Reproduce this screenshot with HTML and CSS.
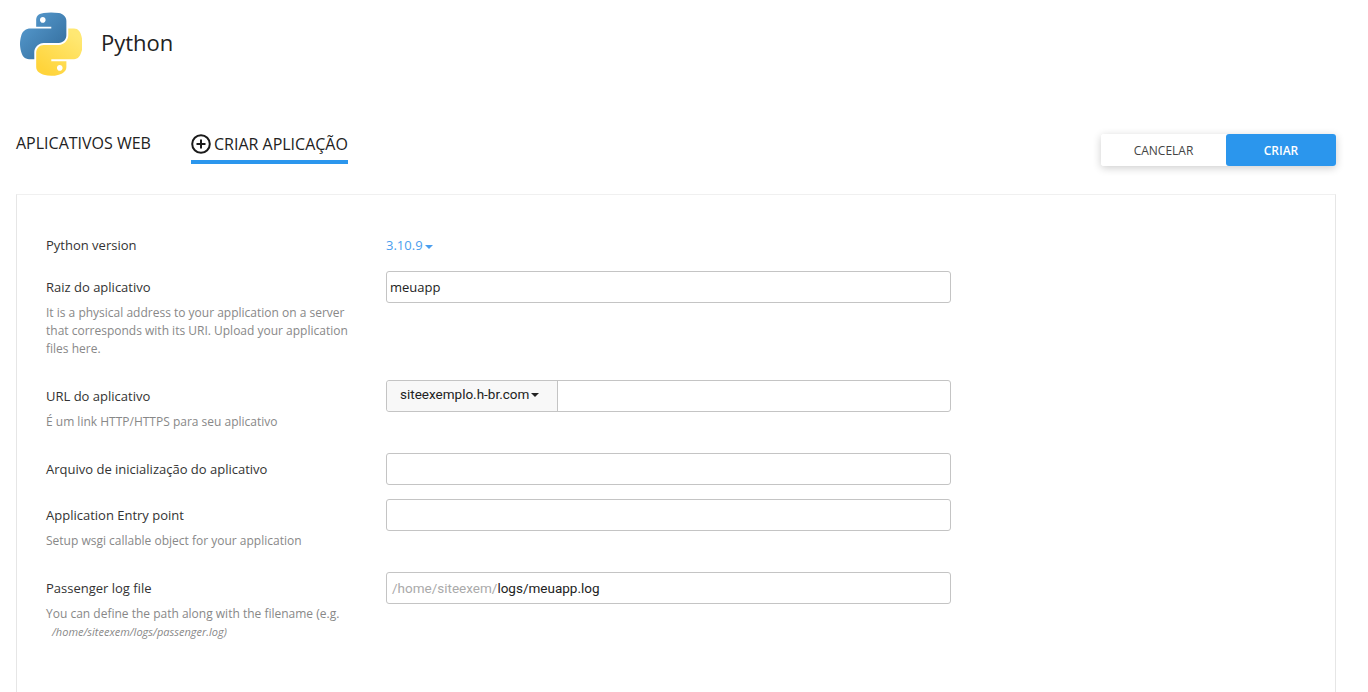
FILE: index.html
```html
<!DOCTYPE html>
<html lang="en">
<head>
  <meta charset="UTF-8">
  <title>Python</title>
  <link rel="stylesheet" href="styles.css">
</head>
<body>
  <header class="page-header">
    <svg class="logo" viewBox="0 0 110 112" width="62" height="64">
      <defs>
        <linearGradient id="py-blue" x1="0" y1="0" x2="1" y2="1">
          <stop offset="0" stop-color="#5a9fd4"/>
          <stop offset="1" stop-color="#306998"/>
        </linearGradient>
        <linearGradient id="py-yellow" x1="0.2" y1="0.9" x2="0.8" y2="0.1">
          <stop offset="0" stop-color="#ffd43b"/>
          <stop offset="1" stop-color="#ffe873"/>
        </linearGradient>
      </defs>
      <path fill="url(#py-blue)" d="M54.919 0.001c-4.584.022-8.961.413-12.813 1.095C30.76 3.099 28.7 7.295 28.7 15.032v10.219h26.813v3.406H18.638c-7.793 0-14.616 4.684-16.75 13.594-2.462 10.213-2.571 16.586 0 27.25 1.906 7.938 6.457 13.594 14.25 13.594h9.219v-12.25c0-8.85 7.657-16.656 16.75-16.656h26.781c7.454 0 13.406-6.138 13.406-13.625v-25.531c0-7.266-6.13-12.725-13.406-13.937C64.282.328 59.502-.02 54.918.001zm-14.5 8.219c2.77 0 5.031 2.299 5.031 5.125 0 2.816-2.262 5.094-5.031 5.094-2.78 0-5.031-2.278-5.031-5.094 0-2.826 2.252-5.125 5.031-5.125z"/>
      <path fill="url(#py-yellow)" d="M85.638 28.657v11.906c0 9.231-7.826 17-16.75 17H42.106c-7.336 0-13.406 6.278-13.406 13.625v25.531c0 7.266 6.319 11.54 13.406 13.625 8.488 2.496 16.627 2.947 26.781 0 6.75-1.954 13.406-5.888 13.406-13.625V86.5H55.513v-3.405H95.7c7.793 0 10.696-5.436 13.406-13.594 2.8-8.399 2.68-16.476 0-27.25-1.925-7.758-5.604-13.594-13.406-13.594h-10.062zM70.575 93.313c2.78 0 5.031 2.278 5.031 5.094 0 2.826-2.252 5.125-5.031 5.125-2.77 0-5.031-2.299-5.031-5.125 0-2.816 2.262-5.094 5.031-5.094z"/>
    </svg>
    <h1>Python</h1>
  </header>

  <div class="toolbar">
    <nav class="tabs">
      <a class="tab">APLICATIVOS WEB</a>
      <a class="tab active">
        <svg class="tab-icon" viewBox="0 0 20 20" width="20" height="20">
          <circle cx="10" cy="10" r="8.8" fill="none" stroke="#1a1a1a" stroke-width="2"/>
          <path d="M10 5.5v9M5.5 10h9" fill="none" stroke="#1a1a1a" stroke-width="2"/>
        </svg>CRIAR APLICAÇÃO
      </a>
    </nav>
    <div class="actions">
      <button type="button" class="btn">CANCELAR</button>
      <button type="button" class="btn btn-primary">CRIAR</button>
    </div>
  </div>

  <main class="card">
    <div class="form-row row-version">
      <div class="field-info"><label>Python version</label></div>
      <div class="version">3.10.9<span class="caret"></span></div>
    </div>

    <div class="form-row row-root">
      <div class="field-info">
        <label>Raiz do aplicativo</label>
        <p class="hint">It is a physical address to your application on a server that corresponds with its URI. Upload your application files here.</p>
      </div>
      <div class="input">meuapp</div>
    </div>

    <div class="form-row row-url">
      <div class="field-info">
        <label>URL do aplicativo</label>
        <p class="hint">É um link HTTP/HTTPS para seu aplicativo</p>
      </div>
      <div class="input input-group">
        <div class="domain">siteexemplo.h-br.com<span class="caret dark"></span></div>
      </div>
    </div>

    <div class="form-row row-startup">
      <div class="field-info"><label>Arquivo de inicialização do aplicativo</label></div>
      <div class="input"></div>
    </div>

    <div class="form-row row-entry">
      <div class="field-info">
        <label>Application Entry point</label>
        <p class="hint">Setup wsgi callable object for your application</p>
      </div>
      <div class="input"></div>
    </div>

    <div class="form-row">
      <div class="field-info">
        <label>Passenger log file</label>
        <p class="hint">You can define the path along with the filename (e.g. <em class="hint-path">/home/siteexem/logs/passenger.log)</em></p>
      </div>
      <div class="input input-path"><span class="path-prefix">/home/siteexem/</span>logs/meuapp.log</div>
    </div>
  </main>
</body>
</html>
```

FILE: styles.css
```css
* {
  margin: 0;
  padding: 0;
  box-sizing: border-box;
}

html, body {
  height: 692px;
  overflow: hidden;
}

body {
  font-family: "Open Sans", Arial, sans-serif;
  background-color: #fff;
  color: #333;
  padding: 0 32px 0 16px;
}

.page-header {
  display: flex;
  align-items: center;
  height: 88px;
  padding: 0 0 0 4px;
}

.logo {
  margin-right: 19px;
  margin-top: 0;
}

.page-header h1 {
  font-size: 22px;
  font-weight: 400;
  color: #222;
  margin-top: -4px;
}

.toolbar {
  display: flex;
  justify-content: space-between;
  height: 106px;
  padding-top: 40px;
}

.tabs {
  display: flex;
  gap: 40px;
  height: 36px;
}

.tab {
  font-size: 16px;
  line-height: 30px;
  height: 36px;
  color: #222;
  white-space: nowrap;
}

.tab.active {
  display: flex;
  align-items: center;
  height: 36px;
  border-bottom: 4px solid #2b96ed;
}

.tab-icon {
  margin-right: 3px;
}

.actions {
  display: flex;
  height: 32px;
  margin-top: 6px;
  box-shadow: 0 2px 8px rgba(0,0,0,0.2);
  border-radius: 3px;
}

.btn {
  font-family: "Open Sans", Arial, sans-serif;
  font-size: 12px;
  border: none;
  border-radius: 3px 0 0 3px;
  background: #fff;
  color: #444;
  width: 125px;
}

.btn-primary {
  width: 110px;
  background: #2b96ed;
  color: #fff;
  font-weight: 600;
  border-radius: 3px;
}

.card {
  height: 600px;
  padding: 34px 30px 0 29px;
  border: 1px solid #f0f0f0;
  border-left-color: #e6e6e6;
  border-right-color: #e6e6e6;
  background: #fff;
}

.form-row {
  display: flex;
}

.field-info {
  width: 340px;
  flex: none;
  padding-right: 38px;
}

.field-info label {
  display: block;
  font-size: 13px;
  line-height: 32px;
  color: #333;
}

.hint {
  font-size: 12px;
  line-height: 18px;
  color: #888;
  margin-top: 1px;
}

.hint-path {
  display: block;
  padding-left: 6px;
  font-size: 11px;
}

.row-version {
  height: 42px;
}

.row-root {
  height: 109px;
}

.row-url {
  height: 73px;
}

.row-startup {
  height: 46px;
}

.row-entry {
  height: 73px;
}

.version {
  font-size: 13px;
  line-height: 32px;
  color: #4a9eee;
  height: 32px;
}

.caret {
  display: inline-block;
  margin-left: 2px;
  vertical-align: middle;
  border-top: 4px solid #4a9eee;
  border-left: 4px solid transparent;
  border-right: 4px solid transparent;
}

.caret.dark {
  border-top-color: #222;
}

.input {
  width: 565px;
  height: 32px;
  border: 1px solid #c4c4c4;
  border-radius: 3px;
  padding: 0 3px;
  font-size: 13px;
  line-height: 30px;
  color: #222;
}

.input-group {
  padding: 0;
  display: flex;
}

.domain {
  font-family: Roboto, Arial, sans-serif;
  font-size: 13.5px;
  line-height: 26px;
  width: 171px;
  padding-left: 13px;
  background: #f8f8f8;
  border-right: 1px solid #c4c4c4;
  border-radius: 3px 0 0 3px;
  color: #222;
}

.input-path {
  font-family: Roboto, Arial, sans-serif;
  font-size: 13.5px;
  padding-left: 5px;
}

.path-prefix {
  color: #aaa;
}
```
